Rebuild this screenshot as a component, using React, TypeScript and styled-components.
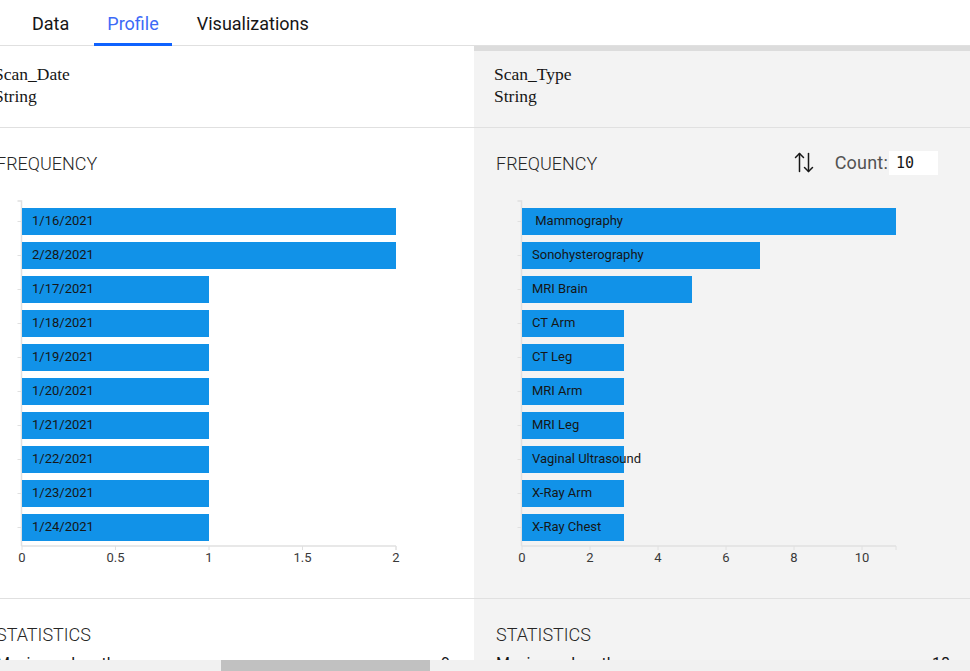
import React, { useLayoutEffect, useRef, useState } from "react";
import styled, { createGlobalStyle } from "styled-components";

const GlobalStyle = createGlobalStyle`
  html, body { margin: 0; padding: 0; overflow: hidden; background: #ffffff; }
  body { font-family: Roboto, "Noto Sans", sans-serif; color: #161616; }
  * { box-sizing: border-box; }
`;

type Bar = { label: string; value: number };
type ColumnSpec = {
  name: string;
  type: string;
  bars: Bar[];
  max: number;
  ticks: number[];
  maxLength: number;
};

const dates = ["1/17/2021", "1/18/2021", "1/19/2021", "1/20/2021", "1/21/2021", "1/22/2021", "1/23/2021", "1/24/2021"];

const columns: ColumnSpec[] = [
  {
    name: "Patient_ID",
    type: "Integer",
    bars: Array.from({ length: 10 }, (_, i) => ({ label: String(1001 + i), value: 1 })),
    max: 1,
    ticks: [0, 0.2, 0.4, 0.6, 0.8, 1],
    maxLength: 4,
  },
  {
    name: "Patient_Name",
    type: "String",
    bars: ["A. Smith", "B. Jones", "C. Brown", "D. Lee", "E. Clark", "F. Young", "G. King", "H. Scott", "I. Green", "J. Adams"].map((l) => ({ label: l, value: 1 })),
    max: 1,
    ticks: [0, 0.2, 0.4, 0.6, 0.8, 1],
    maxLength: 8,
  },
  {
    name: "Scan_Date",
    type: "String",
    bars: [
      { label: "1/16/2021", value: 2 },
      { label: "2/28/2021", value: 2 },
      ...dates.map((d) => ({ label: d, value: 1 })),
    ],
    max: 2,
    ticks: [0, 0.5, 1, 1.5, 2],
    maxLength: 9,
  },
  {
    name: "Scan_Type",
    type: "String",
    bars: [
      { label: "\u00a0Mammography", value: 11 },
      { label: "Sonohysterography", value: 7 },
      { label: "MRI Brain", value: 5 },
      { label: "CT Arm", value: 3 },
      { label: "CT Leg", value: 3 },
      { label: "MRI Arm", value: 3 },
      { label: "MRI Leg", value: 3 },
      { label: "Vaginal Ultrasound", value: 3 },
      { label: "X-Ray Arm", value: 3 },
      { label: "X-Ray Chest", value: 3 },
    ],
    max: 11,
    ticks: [0, 2, 4, 6, 8, 10],
    maxLength: 18,
  },
  {
    name: "Result",
    type: "String",
    bars: [
      { label: "Normal", value: 20 },
      { label: "Benign", value: 12 },
      { label: "Follow-up", value: 6 },
    ],
    max: 20,
    ticks: [0, 5, 10, 15, 20],
    maxLength: 9,
  },
  {
    name: "Radiologist",
    type: "String",
    bars: [
      { label: "Dr. Patel", value: 14 },
      { label: "Dr. Nguyen", value: 12 },
      { label: "Dr. Garcia", value: 10 },
    ],
    max: 14,
    ticks: [0, 2, 4, 6, 8, 10, 12, 14],
    maxLength: 10,
  },
  {
    name: "Facility",
    type: "String",
    bars: [
      { label: "North Clinic", value: 18 },
      { label: "South Clinic", value: 18 },
    ],
    max: 18,
    ticks: [0, 5, 10, 15],
    maxLength: 12,
  },
  {
    name: "Age",
    type: "Integer",
    bars: [
      { label: "42", value: 4 },
      { label: "37", value: 3 },
      { label: "55", value: 3 },
      { label: "61", value: 2 },
    ],
    max: 4,
    ticks: [0, 1, 2, 3, 4],
    maxLength: 2,
  },
  {
    name: "Gender",
    type: "String",
    bars: [
      { label: "F", value: 30 },
      { label: "M", value: 6 },
    ],
    max: 30,
    ticks: [0, 10, 20, 30],
    maxLength: 1,
  },
];

const Page = styled.div`
  width: 970px;
  height: 671px;
  display: flex;
  flex-direction: column;
  overflow: hidden;
`;

const TabBar = styled.nav`
  display: flex;
  gap: 12px;
  padding-left: 19px;
  height: 46px;
  border-bottom: 1px solid #e0e0e0;
  flex: none;
`;

const Tab = styled.button<{ $active?: boolean }>`
  border: 0;
  background: none;
  margin: 0 0 -1px;
  padding: 4px 13px 0;
  height: 46px;
  font-family: Roboto, "Noto Sans", sans-serif;
  font-size: 18px;
  font-weight: 400;
  color: ${(p) => (p.$active ? "#3d6af7" : "#161616")};
  border-bottom: 3px solid ${(p) => (p.$active ? "#0f62fe" : "transparent")};
  cursor: pointer;
`;

const Viewport = styled.div`
  height: 614px;
  flex: none;
  overflow: hidden;
`;

const ScrollTrack = styled.div`
  height: 15px;
  flex: none;
  display: flex;
  background: #f1f1f1;
`;

const ScrollThumb = styled.div`
  height: 100%;
  flex: none;
  background: #c1c1c1;
`;

const ColumnsRow = styled.div`
  display: flex;
  width: max-content;
  min-height: 100%;
`;

const Column = styled.section<{ $selected?: boolean }>`
  width: 500px;
  flex: none;
  display: flex;
  flex-direction: column;
  background: ${(p) => (p.$selected ? "#f3f3f3" : "#ffffff")};
  border-top: 5px solid ${(p) => (p.$selected ? "#dcdcdc" : "#ffffff")};
`;

const ColumnHeader = styled.header`
  padding: 12px 20px 20px;
  border-bottom: 1px solid #e0e0e0;
  font-family: "Liberation Serif", "Times New Roman", serif;
  font-size: 17.5px;
  line-height: 22px;
  color: #161616;
`;

const HeaderLine = styled.div`
  white-space: nowrap;
`;

const Section = styled.div<{ $padTop: number; $padBottom: number }>`
  padding: ${(p) => p.$padTop}px 0 ${(p) => p.$padBottom}px;
  border-bottom: 1px solid #e0e0e0;
`;

const SectionHead = styled.div`
  display: flex;
  align-items: center;
  justify-content: space-between;
  height: 25px;
  padding: 0 36px 0 22px;
`;

const SectionTitle = styled.h3`
  margin: 0;
  font-family: Roboto, "Noto Sans", sans-serif;
  font-size: 18px;
  font-weight: 300;
  line-height: 24px;
  color: #262626;
  transform: translateY(1px);
`;

const Controls = styled.div`
  display: flex;
  align-items: center;
`;

const SortButton = styled.button`
  border: 0;
  background: none;
  padding: 0;
  margin-right: 21px;
  display: flex;
  align-items: center;
  color: #161616;
  cursor: pointer;
`;

const CountLabel = styled.label`
  font-family: Roboto, "Noto Sans", sans-serif;
  font-size: 18px;
  letter-spacing: 0.2px;
  color: #525252;
  margin-right: 1px;
`;

const CountInput = styled.input`
  width: 49px;
  height: 24px;
  border: 0;
  outline: none;
  background: #ffffff;
  padding: 0 0 0 7px;
  font-family: "DejaVu Sans Mono", "Liberation Mono", monospace;
  font-size: 15px;
  color: #161616;
`;

const ChartSvg = styled.svg`
  display: block;
  margin-top: 20px;
  text {
    font-family: Roboto, "Noto Sans", sans-serif;
  }
`;

const StatsRow = styled.div`
  display: flex;
  justify-content: space-between;
  margin-top: 6px;
  padding: 0 24px 0 22px;
  font-family: Roboto, "Noto Sans", sans-serif;
  font-size: 16px;
  line-height: 24px;
  color: #161616;
`;

const COLUMN_W = 500;
const CHART_W = 500;
const CHART_H = 375;
const AXIS_X = 47.5;
const BAR_X = 48;
const PLOT_W = 374;
const TOP = 6;
const BOTTOM = 351;
const BAR_Y0 = 13;
const PITCH = 34;
const BAR_H = 27;
const AXIS = "#e0e0e0";
const SCROLL_LEFT = 2 * COLUMN_W + 26;

function FrequencyChart({ bars, max, ticks }: { bars: Bar[]; max: number; ticks: number[] }) {
  const x = (v: number) => BAR_X + (v / max) * PLOT_W;
  const end = BAR_X + PLOT_W;
  return (
    <ChartSvg width={CHART_W} height={CHART_H} viewBox={`0 0 ${CHART_W} ${CHART_H}`}>
      <path d={`M${AXIS_X - 4},${TOP}H${AXIS_X}V${BOTTOM}`} fill="none" stroke={AXIS} strokeWidth={1.5} />
      {bars.map((b, i) => {
        const y = BAR_Y0 + i * PITCH;
        return (
          <g key={b.label + i}>
            <line x1={AXIS_X - 4} x2={AXIS_X} y1={y + BAR_H / 2} y2={y + BAR_H / 2} stroke={AXIS} strokeWidth={1} />
            <rect x={BAR_X} y={y} width={x(b.value) - BAR_X} height={BAR_H} fill="#1192e8" />
            <text x={BAR_X + 10} y={y + BAR_H / 2 - 1} dominantBaseline="central" fontSize={13} fill="#161616">
              {b.label}
            </text>
          </g>
        );
      })}
      <line x1={AXIS_X} x2={end} y1={BOTTOM} y2={BOTTOM} stroke={AXIS} strokeWidth={1.5} />
      <line x1={end} x2={end} y1={BOTTOM} y2={BOTTOM + 4} stroke={AXIS} strokeWidth={1} />
      {ticks.map((t) => (
        <g key={t}>
          <line x1={x(t)} x2={x(t)} y1={BOTTOM} y2={BOTTOM + 4} stroke={AXIS} strokeWidth={1} />
          <text x={x(t)} y={BOTTOM + 11} textAnchor="middle" dominantBaseline="central" fontSize={13} fill="#393939">
            {String(t)}
          </text>
        </g>
      ))}
    </ChartSvg>
  );
}

function SortIcon() {
  return (
    <svg width="20" height="21" viewBox="0 0 20 21" fill="none" stroke="#161616" strokeWidth="1.5" strokeLinecap="round" strokeLinejoin="round">
      <path d="M5.5 1.5V19.5" />
      <path d="M1.5 5.5L5.5 1.5L9.5 5.5" />
      <path d="M14.5 1.5V19.5" />
      <path d="M10.5 15.5L14.5 19.5L18.5 15.5" />
    </svg>
  );
}

function ProfileColumn({ spec, selected }: { spec: ColumnSpec; selected: boolean }) {
  return (
    <Column $selected={selected}>
      <ColumnHeader>
        <HeaderLine>{spec.name}</HeaderLine>
        <HeaderLine>{spec.type}</HeaderLine>
      </ColumnHeader>
      <Section $padTop={22} $padBottom={28}>
        <SectionHead>
          <SectionTitle>FREQUENCY</SectionTitle>
          {selected && (
            <Controls>
              <SortButton aria-label="Sort">
                <SortIcon />
              </SortButton>
              <CountLabel>Count:</CountLabel>
              <CountInput defaultValue="10" />
            </Controls>
          )}
        </SectionHead>
        <FrequencyChart bars={spec.bars} max={spec.max} ticks={spec.ticks} />
      </Section>
      <Section $padTop={22} $padBottom={20}>
        <SectionHead>
          <SectionTitle>STATISTICS</SectionTitle>
        </SectionHead>
        <StatsRow>
          <span>Maximum length</span>
          <span>{spec.maxLength}</span>
        </StatsRow>
        <StatsRow>
          <span>Minimum length</span>
          <span>{Math.max(1, spec.maxLength - 3)}</span>
        </StatsRow>
      </Section>
    </Column>
  );
}

export default function App() {
  const viewRef = useRef<HTMLDivElement>(null);
  const [thumb, setThumb] = useState({ width: 210, left: 221 });

  useLayoutEffect(() => {
    const el = viewRef.current;
    if (!el) return;
    el.scrollLeft = SCROLL_LEFT;
    const ratio = el.clientWidth / el.scrollWidth;
    setThumb({ width: el.clientWidth * ratio, left: el.scrollLeft * ratio });
  }, []);

  return (
    <Page>
      <GlobalStyle />
      <TabBar>
        <Tab>Data</Tab>
        <Tab $active>Profile</Tab>
        <Tab>Visualizations</Tab>
      </TabBar>
      <Viewport ref={viewRef}>
        <ColumnsRow>
          {columns.map((c, i) => (
            <ProfileColumn key={c.name} spec={c} selected={i === 3} />
          ))}
        </ColumnsRow>
      </Viewport>
      <ScrollTrack>
        <ScrollThumb style={{ width: thumb.width, marginLeft: thumb.left }} />
      </ScrollTrack>
    </Page>
  );
}
